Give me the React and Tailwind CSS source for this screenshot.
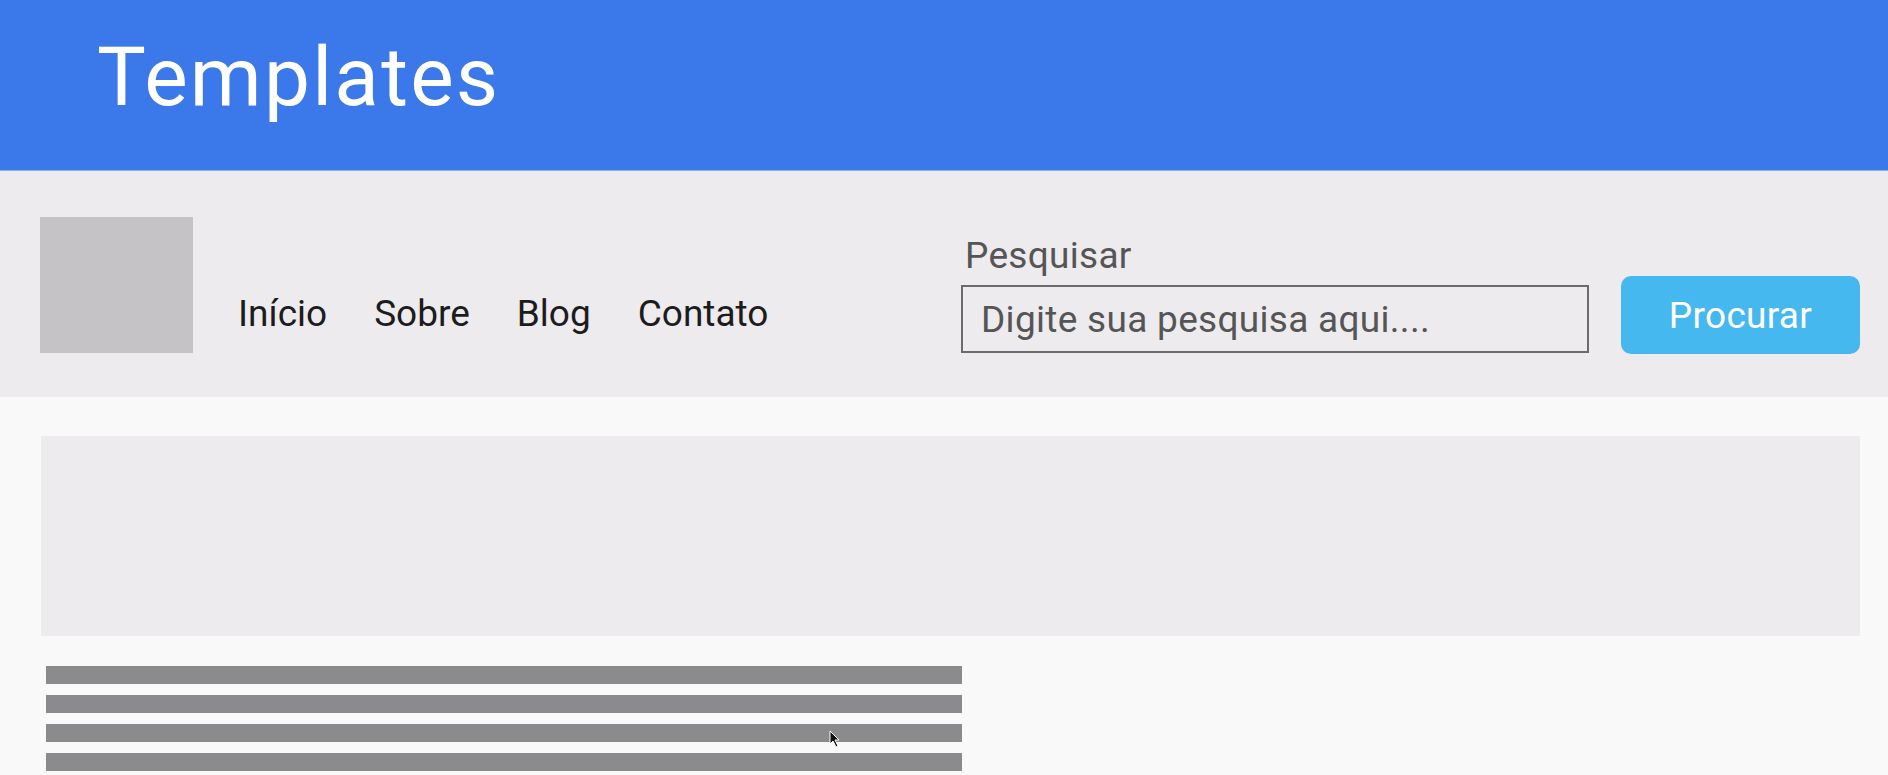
import React from 'react'

const links = ['Início', 'Sobre', 'Blog', 'Contato']

export default function App() {
  return (
    <div className="min-h-[775px] bg-[#f9f9f9]" style={{ fontFamily: 'Roboto, "Noto Sans", Arial, sans-serif' }}>
      <header className="h-[171px] bg-[#3b78e9] border-b border-[#8fb0e6] pl-[97px] pt-[36px]">
        <h1 className="text-[82px] leading-none font-normal tracking-[2.2px] text-white">Templates</h1>
      </header>

      <nav className="h-[226px] bg-[#edebee] flex items-start pl-[40px] pr-[28px]">
        <div className="mt-[46px] w-[153px] h-[136px] bg-[#c5c3c6]" />
        <ul className="mt-[124px] ml-[45px] flex gap-[47px] text-[37px] leading-none text-[#1c1c1c]">
          {links.map((l) => (
            <li key={l}>{l}</li>
          ))}
        </ul>
        <div className="ml-auto mt-[66px] flex flex-col">
          <label className="ml-[4px] text-[37px] leading-none tracking-[0.3px] text-[#555555]">Pesquisar</label>
          <input
            className="mt-[11px] w-[628px] h-[68px] border-2 border-[#6b6b6b] bg-transparent pl-[18px] text-[37px] tracking-[0.3px] text-[#555555] placeholder:text-[#555555] outline-none"
            placeholder="Digite sua pesquisa aqui...."
          />
        </div>
        <button className="ml-[32px] mt-[105px] w-[239px] h-[78px] rounded-[10px] bg-[#46b8f0] text-white text-[37px] leading-none tracking-[0.3px]">
          Procurar
        </button>
      </nav>

      <main className="relative pl-[41px] pr-[28px] pt-[39px]">
        <div className="h-[200px] bg-[#edebee]" />
        <div className="mt-[30px] ml-[5px] w-[916px] flex flex-col gap-[11px]">
          {[0, 1, 2, 3].map((i) => (
            <div key={i} className="h-[18px] bg-[#8b8b8d]" />
          ))}
        </div>
        <svg className="absolute left-[829px] top-[333px]" width="11" height="18" viewBox="0 0 11 18">
          <path d="M1 1 L1 14 L4 11 L7 17 L9 16 L6 10 L10 10 Z" fill="#111" stroke="#fff" strokeWidth="1" />
        </svg>
      </main>
    </div>
  )
}
